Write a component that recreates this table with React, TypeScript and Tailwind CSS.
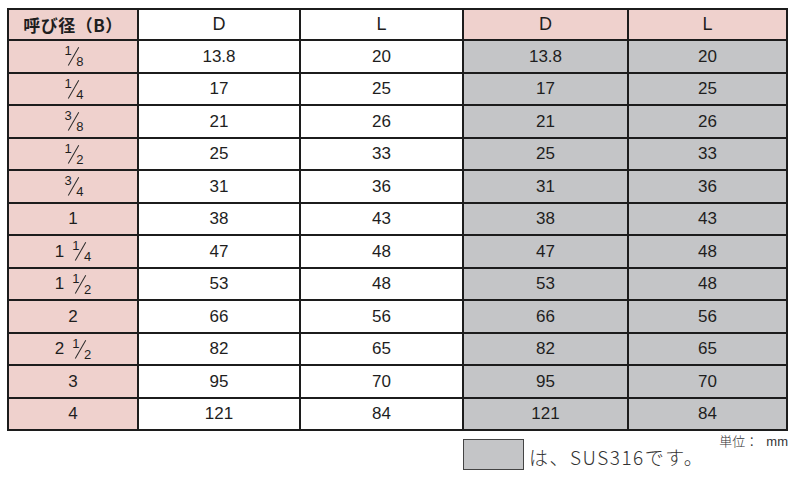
import React from "react";

type Frac = { w?: string; n?: string; d?: string };

const rows: { size: Frac; d: string; l: string }[] = [
  { size: { n: "1", d: "8" }, d: "13.8", l: "20" },
  { size: { n: "1", d: "4" }, d: "17", l: "25" },
  { size: { n: "3", d: "8" }, d: "21", l: "26" },
  { size: { n: "1", d: "2" }, d: "25", l: "33" },
  { size: { n: "3", d: "4" }, d: "31", l: "36" },
  { size: { w: "1" }, d: "38", l: "43" },
  { size: { w: "1", n: "1", d: "4" }, d: "47", l: "48" },
  { size: { w: "1", n: "1", d: "2" }, d: "53", l: "48" },
  { size: { w: "2" }, d: "66", l: "56" },
  { size: { w: "2", n: "1", d: "2" }, d: "82", l: "65" },
  { size: { w: "3" }, d: "95", l: "70" },
  { size: { w: "4" }, d: "121", l: "84" },
];

function Size({ f }: { f: Frac }) {
  return (
    <span className="inline-flex items-center">
      {f.w && <span className="text-[17px]">{f.w}</span>}
      {f.w && f.n && <span className="w-[6px]" />}
      {f.n && (
        <span className="relative inline-block w-[21px] h-[22px]">
          <span className="absolute left-[2px] top-[-1px] text-[13px] leading-none">{f.n}</span>
          <span className="absolute left-[10px] top-[1px] w-[1.2px] h-[21px] bg-[#2a2a2a] rotate-[30deg]" />
          <span className="absolute right-[0px] bottom-[-1px] text-[13px] leading-none">{f.d}</span>
        </span>
      )}
    </span>
  );
}

const cell = "flex items-center justify-center text-[17px] text-[#1e1e1e]";

export default function App() {
  return (
    <div
      className="w-[800px] h-[478px] bg-white relative overflow-hidden"
      style={{ fontFamily: '"Liberation Sans", Arial, "Noto Sans CJK JP", sans-serif' }}
    >
      <div className="ml-[7px] pt-[8px]">
        <div className="grid grid-cols-[128px_160px_161px_163px_157px] grid-rows-[29px_repeat(12,30.5px)] gap-[2px] p-[2px] bg-[#1c1c1c] w-[781px]">
          <div
            className={`${cell} bg-[#efd1cd] font-bold !text-[17px] tracking-[0.5px]`}
            style={{ fontFamily: '"Noto Sans CJK JP", sans-serif' }}
          >
            呼び径（B）
          </div>
          <div className={`${cell} bg-white !text-[18px]`}>D</div>
          <div className={`${cell} bg-white !text-[18px]`}>L</div>
          <div className={`${cell} bg-[#efd1cd] !text-[18px]`}>D</div>
          <div className={`${cell} bg-[#efd1cd] !text-[18px]`}>L</div>
          {rows.map((r, i) => (
            <React.Fragment key={i}>
              <div className={`${cell} bg-[#efd1cd]`}>
                <Size f={r.size} />
              </div>
              <div className={`${cell} bg-white`}>{r.d}</div>
              <div className={`${cell} bg-white`}>{r.l}</div>
              <div className={`${cell} bg-[#c4c5c7]`}>{r.d}</div>
              <div className={`${cell} bg-[#c4c5c7]`}>{r.l}</div>
            </React.Fragment>
          ))}
        </div>
        <div className="flex mt-[8px] ml-[456px]">
          <div className="w-[61px] h-[31px] bg-[#c4c5c7] border border-[#444]" />
          <div
            className="ml-[5px] mt-[8px] text-[19px] font-light tracking-[1.5px] text-[#333] leading-none"
            style={{ fontFamily: '"Noto Sans CJK JP", sans-serif' }}
          >
            は、SUS316です。
          </div>
          <div
            className="ml-auto mr-[12px] -mt-[5px] flex items-baseline gap-[8px] text-[13px] text-[#333] leading-none"
            style={{ fontFamily: '"Noto Sans CJK JP", sans-serif' }}
          >
            <span className="font-light">単位：</span>
            <span style={{ fontFamily: '"Liberation Sans", sans-serif' }}>mm</span>
          </div>
        </div>
      </div>
    </div>
  );
}
